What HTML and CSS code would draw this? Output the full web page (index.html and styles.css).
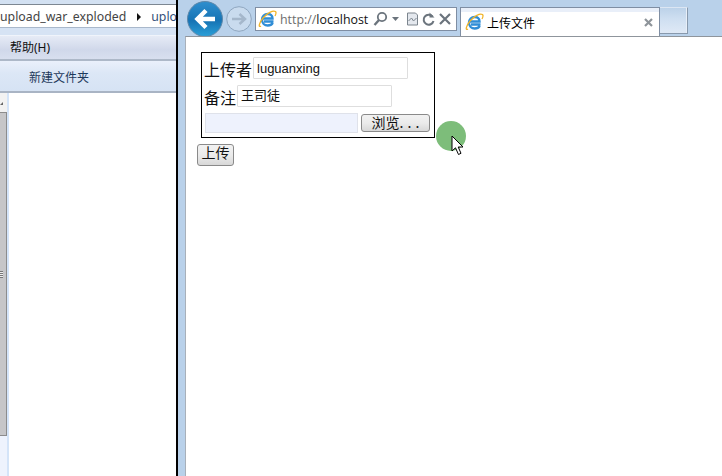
FILE: index.html
```html
<!DOCTYPE html>
<html lang="en">
<head>
  <meta charset="UTF-8">
  <title>上传文件</title>
  <link rel="stylesheet" href="styles.css">
</head>
<body>
  <div class="explorer">
    <div class="top-strip"></div>
    <div class="crumbs"><span>upload_war_exploded</span><i class="crumb-arrow"></i><span class="crumb-last">uplo</span></div>
    <div class="crumbs-gap"></div>
    <div class="menu-bar">帮助(H)</div>
    <div class="tool-bar">新建文件夹</div>
    <div class="pane">
      <div class="scroll">
        <div class="scroll-up"><i></i></div>
        <div class="scroll-thumb"><i></i></div>
      </div>
      <div class="pane-line"></div>
    </div>
  </div>

  <div class="browser">
    <div class="nav">
      <div class="back">
        <svg width="36" height="36" viewBox="0 0 36 36">
          <defs>
            <linearGradient id="backfill" x1="0" y1="0" x2="0" y2="1">
              <stop offset="0" stop-color="#2f8fce"/>
              <stop offset="0.55" stop-color="#1673b4"/>
              <stop offset="1" stop-color="#2ba0d8"/>
            </linearGradient>
          </defs>
          <circle cx="18" cy="18" r="17.5" fill="url(#backfill)" stroke="#5f87a8"/>
          <path d="M28 18H11M19 9.500L10.500 18L19 26.500" fill="none" stroke="#fff" stroke-width="4.5"/>
        </svg>
      </div>
      <div class="forward">
        <svg width="26" height="26" viewBox="0 0 26 26">
          <circle cx="13" cy="13" r="12.3" fill="#c9dbee" stroke="#8fa6bf"/>
          <path d="M6 13H18M13.5 8L19 13L13.5 18" fill="none" stroke="#a5b7cb" stroke-width="2.5"/>
        </svg>
      </div>
      <div class="address">
        <svg class="ie" width="19" height="19" viewBox="0 0 19 19">
          <path d="M15.5 11.5H6M4.5 8.500H14.5C14.5 5.500 12.5 4 9.800 4C6.500 4 4 6.500 4 9.800C4 13 6.500 15.5 9.800 15.5C12 15.5 13.800 14.5 14.800 12.800" fill="none" stroke="#2f8dd6" stroke-width="2.4"/>
          <path d="M3 16C0 18 1 13 5 8C9 3 15 0 17.5 1.5C18.5 2.500 17.800 4.500 17 6" fill="none" stroke="#f0b429" stroke-width="1.3"/>
        </svg>
        <span class="url"><span class="url-dim">http://</span>localhost</span>
        <svg class="tools" width="82" height="18" viewBox="0 0 82 18">
          <circle cx="10" cy="7" r="4.2" fill="none" stroke="#6b747d" stroke-width="1.8"/>
          <path d="M7 10L2.5 15" stroke="#6b747d" stroke-width="2.4"/>
          <path d="M20 7H27L23.5 11Z" fill="#6b747d"/>
          <path d="M35.5 3H43.5L45.5 5V15H35.5Z" fill="#e4e8ee" stroke="#7c858e"/>
          <path d="M36.5 11L39.5 8L41.5 11L44.5 8" fill="none" stroke="#7c858e"/>
          <path d="M60.500 6.500A5 5 0 1 0 61.500 11" fill="none" stroke="#6b747d" stroke-width="2"/>
          <path d="M57.5 2.500V7.500H62.5Z" fill="#6b747d"/>
          <path d="M68 4L78 14M78 4L68 14" stroke="#6b747d" stroke-width="2.2"/>
        </svg>
      </div>
      <div class="tab">
        <svg class="ie" width="19" height="19" viewBox="0 0 19 19">
          <path d="M15.5 11.5H6M4.5 8.500H14.5C14.5 5.500 12.5 4 9.800 4C6.500 4 4 6.500 4 9.800C4 13 6.500 15.5 9.800 15.5C12 15.5 13.800 14.5 14.800 12.800" fill="none" stroke="#2f8dd6" stroke-width="2.4"/>
          <path d="M3 16C0 18 1 13 5 8C9 3 15 0 17.5 1.5C18.5 2.500 17.800 4.500 17 6" fill="none" stroke="#f0b429" stroke-width="1.3"/>
        </svg>
        <span class="tab-title">上传文件</span>
        <svg class="tab-close" width="9" height="9" viewBox="0 0 9 9">
          <path d="M1 1L8 8M8 1L1 8" stroke="#8e949a" stroke-width="2.2"/>
        </svg>
      </div>
      <div class="new-tab"></div>
    </div>

    <div class="page">
      <div class="upload-box">
        <div class="row">
          <span class="caption">上传者</span>
          <div class="field field-text">luguanxing</div>
        </div>
        <div class="row">
          <span class="caption">备注</span>
          <div class="field field-cjk">王司徒</div>
        </div>
        <div class="row file-row">
          <div class="file-name"></div>
          <button class="btn btn-browse" type="button">浏览. . .</button>
        </div>
      </div>
      <button class="btn btn-submit" type="button">上传</button>
    </div>
  </div>

  <!-- recorded click marker and mouse pointer -->
  <div class="click-dot"></div>
  <svg class="pointer" width="14" height="21" viewBox="0 0 14 21">
    <path d="M1 1V16L4.5 12.800L7.5 19.5L10 18.300L7.200 12H12Z" fill="#fff" stroke="#000"/>
  </svg>
</body>
</html>
```

FILE: styles.css
```css
* {
  box-sizing: border-box;
}

html, body {
  height: 476px;
  overflow: hidden;
}

body {
  margin: 0;
  display: flex;
  background-color: #fff;
  color: #000;
  font-family: "Noto Sans", "Noto Sans CJK SC", sans-serif;
}

/* left window */
.explorer {
  width: 178px;
  flex-shrink: 0;
  display: flex;
  flex-direction: column;
  border-right: 2px solid #000;
  overflow: hidden;
}

.top-strip {
  height: 5px;
  background-color: #d3e1f2;
  border-bottom: 1px solid #7d8792;
}

.crumbs {
  height: 22px;
  display: flex;
  align-items: center;
  white-space: nowrap;
  background-color: #fff;
  font-size: 12.3px;
  color: #444;
}

.crumb-arrow {
  width: 0;
  height: 0;
  flex-shrink: 0;
  margin: 1px 10px 0 11px;
  border-left: 4px solid #111;
  border-top: 4px solid transparent;
  border-bottom: 4px solid transparent;
}

.crumb-last {
  color: #33507a;
}

.crumbs-gap {
  height: 9px;
  background-color: #d6e3f4;
  border-top: 1px solid #a9b8cb;
  border-bottom: 1px solid #f0f4fb;
}

.menu-bar {
  height: 25px;
  padding: 4px 0 0 10px;
  font-size: 12px;
  line-height: 16px;
  color: #111;
  background: linear-gradient(#e6ebf6, #d0d8ea 60%, #d8dfef);
  border-bottom: 2px solid #adb8c8;
}

.tool-bar {
  height: 32px;
  padding: 8px 0 0 29px;
  font-size: 12px;
  line-height: 17px;
  color: #1e395b;
  background: linear-gradient(#eaf0fb, #dce7f6 40%, #d6e3f4);
  border-bottom: 2px solid #a9b4c4;
}

.pane {
  flex: 1;
  display: flex;
}

.scroll {
  width: 7px;
  background-color: #eef3fd;
}

.scroll-up {
  height: 19px;
  padding: 9px 0 0 0;
  background-color: #f2f2f2;
}

.scroll-up i {
  display: block;
  width: 0;
  height: 0;
  border-right: 3px solid #666;
  border-top: 3px solid transparent;
}

.scroll-thumb {
  height: 324px;
  display: flex;
  align-items: center;
  background-color: #c6c6c8;
  border-right: 1px solid #8c8c8c;
  border-top: 1px solid #8c8c8c;
  border-bottom: 1px solid #8c8c8c;
}

.scroll-thumb i {
  display: block;
  width: 3px;
  height: 7px;
  background: repeating-linear-gradient(#777 0 1px, #eee 1px 2px);
}

.pane-line {
  width: 2px;
  background-color: #d4e4f8;
}

/* browser window */
.browser {
  flex: 1;
  display: flex;
  flex-direction: column;
  border-left: 1px solid #b9d1ea;
  background-color: #b9d1ea;
  min-width: 0;
}

.nav {
  height: 36px;
  flex-shrink: 0;
  display: flex;
  align-items: flex-start;
  padding-left: 8px;
  background-color: #b9d1ea;
}

.back {
  height: 36px;
  margin-top: 1px;
}

.forward {
  margin: 6px 0 0 3px;
  height: 26px;
}

.address {
  width: 202px;
  height: 24px;
  margin: 7px 0 0 3px;
  display: flex;
  align-items: center;
  background-color: #fff;
  border: 1px solid #7f8ea3;
  padding-left: 2px;
  overflow: hidden;
}

.ie {
  flex-shrink: 0;
}

.url {
  margin-left: 3px;
  width: 88px;
  flex-shrink: 0;
  white-space: nowrap;
  font-family: "Open Sans", sans-serif;
  font-size: 12.4px;
  color: #111;
}

.url-dim {
  color: #6d6d6d;
}

.tools {
  flex-shrink: 0;
  margin-left: 4px;
}

.tab {
  width: 200px;
  height: 29px;
  margin: 7px 0 0 3px;
  display: flex;
  align-items: center;
  padding-left: 4px;
  background: linear-gradient(#e9eff9 4px, #fff 4px);
  border: 1px solid #7f8ea3;
  border-bottom: 0;
}

.tab-title {
  margin-left: 3px;
  font-size: 12px;
  font-family: "Noto Sans CJK SC", sans-serif;
}

.tab-close {
  margin-left: auto;
  margin-right: 6px;
}

.new-tab {
  width: 28px;
  height: 27px;
  margin-top: 7px;
  background: linear-gradient(#bcd2e9, #cfdff1 45%, #dfe9f6);
  border: 1px solid #8899ad;
  border-left: 0;
  border-top-color: #dce6f3;
  box-shadow: inset -1px 0 0 #e8eff8;
}

.page {
  flex: 1;
  margin-left: 6px;
  background-color: #fff;
  border-top: 1px solid #8f959c;
  border-left: 1px solid #a8b0ba;
  padding: 15px 0 0 11px;
}

.upload-box {
  width: 234px;
  height: 86px;
  margin-left: 4px;
  padding: 4px 0 0 3px;
  border: 1px solid #000;
}

.row {
  display: flex;
  align-items: center;
  height: 22px;
  margin-bottom: 6px;
}

.caption {
  padding-top: 2px;
  margin-left: -1px;
  margin-right: 1px;
  font-size: 16px;
  line-height: 22px;
  font-family: "Noto Sans CJK SC", sans-serif;
  color: #111;
}

.field {
  width: 155px;
  height: 22px;
  padding-left: 3px;
  background-color: #fff;
  border: 1px solid #dedede;
  border-radius: 1px;
  font-size: 13px;
  line-height: 20px;
  color: #111;
}

.field-text {
  padding-top: 1px;
  font-family: "Liberation Sans", sans-serif;
}

.field-cjk {
  line-height: 18px;
  font-family: "Noto Sans CJK SC", sans-serif;
}

.file-row {
  align-items: flex-start;
  height: 20px;
  margin-bottom: 0;
}

.file-name {
  width: 153px;
  height: 20px;
  background-color: #eef2fd;
  border: 1px solid #dfe2ea;
}

.btn {
  display: block;
  font-family: "Noto Sans CJK SC", sans-serif;
  font-size: 14px;
  color: #111;
  background: linear-gradient(#f2f2f2, #ebebeb 50%, #d8d8d8);
  border: 1px solid #8a8a8a;
  border-radius: 3px;
}

.btn-browse {
  width: 69px;
  height: 18px;
  margin: 1px 0 0 3px;
  padding: 0 0 2px 0;
  line-height: 14px;
  white-space: nowrap;
  word-spacing: 1px;
}

.btn-submit {
  width: 37px;
  height: 22px;
  margin-top: 6px;
  padding: 0 0 6px 0;
  line-height: 14px;
}

/* overlays on top of the recording */
.click-dot {
  position: absolute;
  left: 436px;
  top: 121px;
  width: 30px;
  height: 30px;
  border-radius: 50%;
  background-color: #7dbd7a;
}

.pointer {
  position: absolute;
  left: 451px;
  top: 135px;
}
```
